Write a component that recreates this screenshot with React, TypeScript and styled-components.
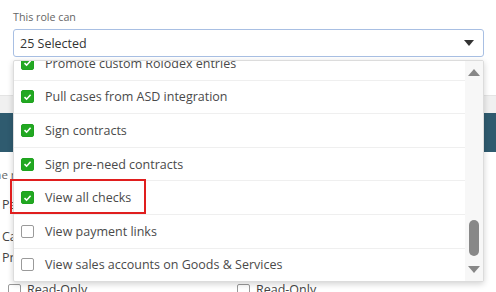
import React, { useLayoutEffect, useRef } from 'react'
import styled, { createGlobalStyle } from 'styled-components'

const ROW_H = 33.6
const SCROLL = 14

const GlobalStyle = createGlobalStyle`
  * { box-sizing: border-box; }
  body {
    margin: 0;
    background: #fff;
    font-family: "Open Sans", "Liberation Sans", sans-serif;
  }
`

const Page = styled.div`
  position: relative;
  width: 496px;
  height: 292px;
  overflow: hidden;
  background: #fff;
`

const Field = styled.div`
  padding: 9px 12px 0 13px;
`

const Label = styled.div`
  font-size: 10.7px;
  line-height: 16px;
  color: #666;
  margin-bottom: 4px;
`

const SelectWrap = styled.div`
  position: relative;
`

const SelectBox = styled.div`
  display: flex;
  align-items: center;
  justify-content: space-between;
  height: 28px;
  padding: 0 9px 0 6px;
  border: 1px solid #a8bfe3;
  border-radius: 3px;
  background: #fff;
  font-size: 12.5px;
  color: #333;
`

const Caret = styled.span`
  width: 0;
  height: 0;
  border-left: 5px solid transparent;
  border-right: 5px solid transparent;
  border-top: 6px solid #333;
`

const GrayStrip = styled.div`
  margin-top: 38px;
  height: 18px;
  border-top: 1px solid #e4e4e4;
  background: #f0f0f0;
`

const TealBar = styled.div`
  height: 39px;
  background: #2f5b6f;
`

const Form = styled.div`
  display: flex;
  flex-direction: column;
  padding: 14px 0 0 2px;
  font-size: 12.5px;
  color: #444;
`

const FormNote = styled.div`
  margin-left: -14px;
  font-size: 11.5px;
  color: #666;
  line-height: 18px;
`

const FormRow = styled.div<{ $gap: number }>`
  margin-top: ${({ $gap }) => $gap}px;
  line-height: 18px;
`

const CheckPair = styled.div`
  display: grid;
  grid-template-columns: 229px 1fr;
  margin-top: 14px;
  padding-left: 6px;
`

const PlainCheck = styled.label`
  display: flex;
  align-items: center;
  gap: 6px;
  line-height: 18px;
  color: #444;
`

const Box = styled.span<{ $on?: boolean }>`
  display: inline-flex;
  align-items: center;
  justify-content: center;
  flex: none;
  width: 13px;
  height: 13px;
  border-radius: 2px;
  border: 1px solid ${({ $on }) => ($on ? '#1fa31f' : '#9a9a9a')};
  background: ${({ $on }) => ($on ? '#22a822' : '#fff')};
`

const Menu = styled.div`
  position: absolute;
  top: 31px;
  left: 0;
  right: 0;
  height: 222px;
  display: flex;
  border: 1px solid #dcdcdc;
  border-radius: 2px;
  background: #fff;
  box-shadow: 0 2px 6px rgba(0, 0, 0, 0.18);
  z-index: 2;
`

const List = styled.ul`
  flex: 1;
  margin: 0;
  padding: 0;
  list-style: none;
  overflow: hidden;
`

const Option = styled.li`
  display: flex;
  align-items: center;
  gap: 11px;
  height: ${ROW_H}px;
  padding-left: 7px;
  border-bottom: 1px solid #efefef;
  font-size: 12.5px;
  color: #4a4a4a;
  white-space: nowrap;
`

// red annotation frame drawn over one row, sticking out past the menu edge
const Highlight = styled.span`
  position: absolute;
  left: -4px;
  width: 136px;
  height: 35px;
  border: 2px solid #e01e1e;
  pointer-events: none;
`

const Rail = styled.div`
  display: flex;
  flex-direction: column;
  align-items: center;
  width: 18px;
  padding: 8px 0 8px;
  background: #f7f7f7;
`

const Arrow = styled.span<{ $dir: 'up' | 'down' }>`
  width: 0;
  height: 0;
  border-left: 6px solid transparent;
  border-right: 6px solid transparent;
  ${({ $dir }) =>
    $dir === 'up' ? 'border-bottom: 7px solid #878787;' : 'border-top: 7px solid #878787;'}
`

const Thumb = styled.span`
  margin-top: auto;
  margin-bottom: 10px;
  width: 10px;
  height: 36px;
  border-radius: 5px;
  background: #888;
`

const Tick = () => (
  <svg width="9" height="8" viewBox="0 0 9 8">
    <path d="M1.5 4.2 L3.6 6.2 L7.6 1.8" fill="none" stroke="#fff" strokeWidth="1.6" />
  </svg>
)

const options = [
  { name: 'Promote custom Rolodex entries', on: true },
  { name: 'Pull cases from ASD integration', on: true },
  { name: 'Sign contracts', on: true },
  { name: 'Sign pre-need contracts', on: true },
  { name: 'View all checks', on: true, marked: true },
  { name: 'View payment links', on: false },
  { name: 'View sales accounts on Goods & Services', on: false },
]

export default function App() {
  const listRef = useRef<HTMLUListElement>(null)
  const markedIndex = options.findIndex((o) => o.marked)

  // the menu is scrolled down near its end
  useLayoutEffect(() => {
    if (listRef.current) listRef.current.scrollTop = SCROLL
  }, [])

  return (
    <Page>
      <GlobalStyle />
      <Field>
        <Label>This role can</Label>
        <SelectWrap>
          <SelectBox>
            <span>25 Selected</span>
            <Caret />
          </SelectBox>
          <Menu>
            <List ref={listRef}>
              {options.map((o) => (
                <Option key={o.name}>
                  <Box $on={o.on}>{o.on && <Tick />}</Box>
                  <span>{o.name}</span>
                </Option>
              ))}
            </List>
            <Rail>
              <Arrow $dir="up" />
              <Thumb />
              <Arrow $dir="down" />
            </Rail>
            <Highlight style={{ top: markedIndex * ROW_H - SCROLL - 2 }} />
          </Menu>
        </SelectWrap>
      </Field>

      <GrayStrip />
      <TealBar />
      <Form>
        <FormNote>The role permissions</FormNote>
        <FormRow $gap={12}>Payments</FormRow>
        <FormRow $gap={14}>Cases</FormRow>
        <FormRow $gap={3}>Preneed</FormRow>
        <CheckPair>
          <PlainCheck>
            <Box />
            Read-Only
          </PlainCheck>
          <PlainCheck>
            <Box />
            Read-Only
          </PlainCheck>
        </CheckPair>
      </Form>
    </Page>
  )
}
